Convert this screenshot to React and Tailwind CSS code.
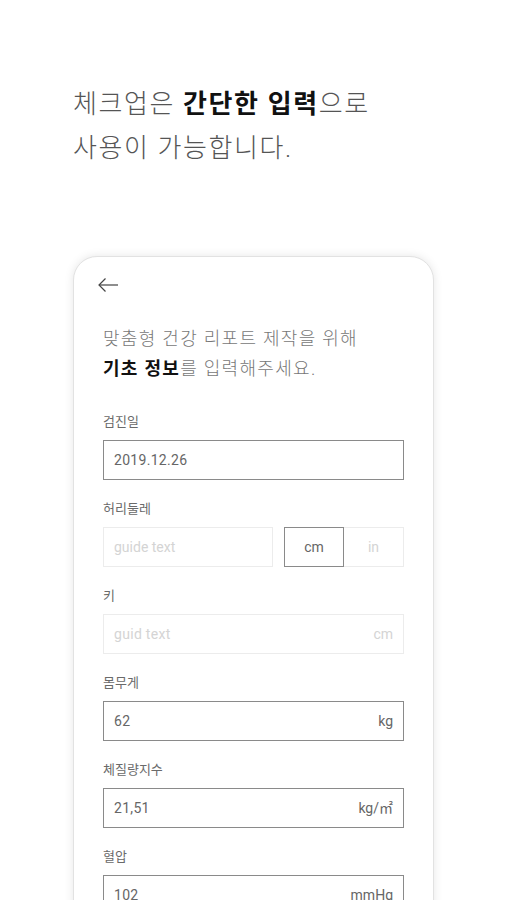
import React from 'react';

const font = { fontFamily: 'Roboto, "Noto Sans CJK KR", "Noto Sans", sans-serif' };

const Field = ({ label, value, unit, filled = true, placeholder }) => (
  <div className="mb-[20px]">
    <div className="text-[13px] leading-[18px] text-[#6a6a6a] mb-[9px]">{label}</div>
    <div
      className={`h-[40px] flex items-center justify-between px-[10px] border ${
        filled ? "border-[#8a8a8a]" : "border-[#ececec]"
      }`}
    >
      <span className={`text-[14px] tracking-[0.3px] ${filled ? "text-[#666]" : "text-[#d4d4d4]"}`}>
        {value || placeholder}
      </span>
      <span className={`text-[14px] ${filled ? "text-[#666]" : "text-[#d4d4d4]"}`}>{unit}</span>
    </div>
  </div>
);

export default function App() {
  return (
    <div className="bg-white min-h-[900px] h-[900px] overflow-hidden" style={font}>
      {/* Headline */}
      <div className="pt-[82px] pl-[73px] text-[26px] leading-[44px] font-light text-[#555] tracking-[1.6px]">
        <div>
          체크업은 <span className="font-bold text-[#111]">간단한 입력</span>으로
        </div>
        <div>사용이 가능합니다.</div>
      </div>

      {/* Phone card */}
      <div className="ml-[73px] mt-[86px] w-[361px] bg-white border border-[#e2e2e2] rounded-t-[24px] shadow-[0_0_10px_rgba(0,0,0,0.10)] pt-[20px] px-[29px] pb-10">
        <div className="h-4 -ml-[6px]">
          <svg width="22" height="16" viewBox="0 0 22 16" fill="none" stroke="#444" strokeWidth="1.2">
            <path d="M21 8H2" />
            <path d="M8.5 1.5L2 8l6.5 6.5" />
          </svg>
        </div>

        <div className="mt-[31px] text-[18px] leading-[30px] text-[#777] font-light tracking-[1.3px]">
          <div>맞춤형 건강 리포트 제작을 위해</div>
          <div>
            <span className="font-bold text-[#111]">기초 정보</span>를 입력해주세요.
          </div>
        </div>

        <div className="mt-[29px]">
          <Field label="검진일" value="2019.12.26" />

          <div className="mb-[20px]">
            <div className="text-[13px] leading-[18px] text-[#6a6a6a] mb-[9px]">허리둘레</div>
            <div className="flex h-[40px]">
              <div className="w-[170px] border border-[#ececec] flex items-center px-[10px] text-[14px] text-[#d4d4d4]">
                guide text
              </div>
              <div className="ml-[11px] w-[60px] border border-[#8a8a8a] flex items-center justify-center text-[14px] text-[#666]">
                cm
              </div>
              <div className="w-[60px] border border-[#ececec] border-l-0 flex items-center justify-center text-[14px] text-[#d4d4d4]">
                in
              </div>
            </div>
          </div>

          <Field label="키" placeholder="guid text" unit="cm" filled={false} />
          <Field label="몸무게" value="62" unit="kg" />
          <Field label="체질량지수" value="21,51" unit="kg/㎡" />
          <Field label="혈압" value="102" unit="mmHg" />
        </div>
      </div>
    </div>
  );
}
